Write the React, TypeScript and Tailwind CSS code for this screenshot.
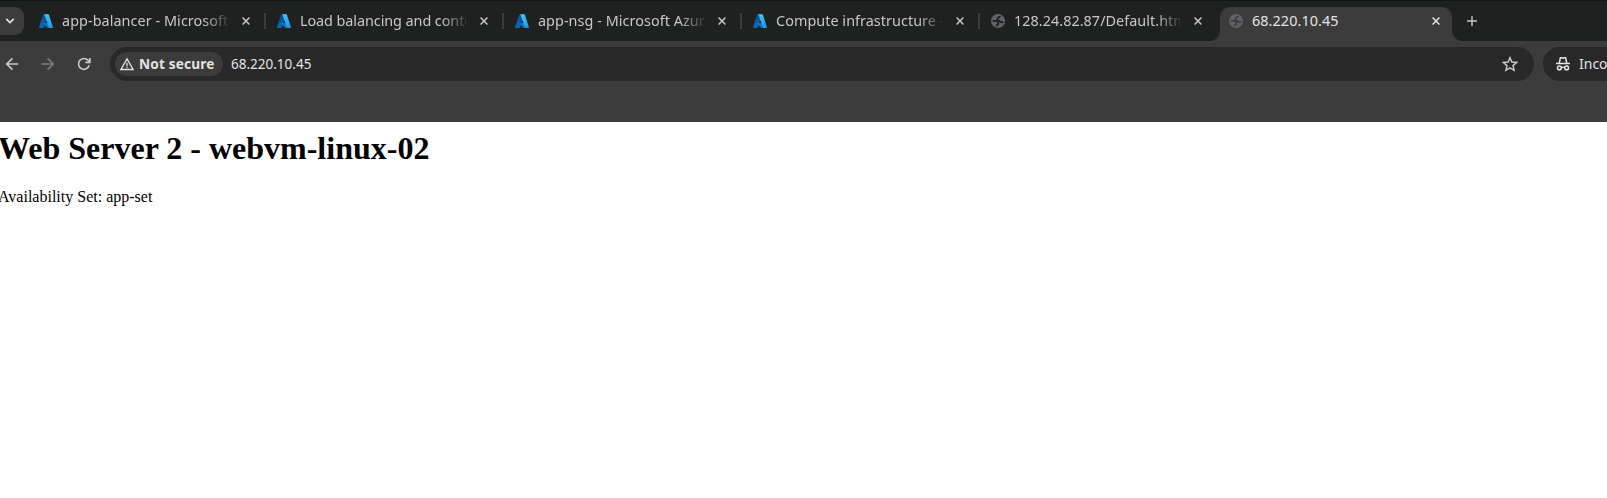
import type { ReactNode } from "react";

type Tab = { title: string; icon: "azure" | "globe"; spacing: string; active?: boolean };

const tabs: Tab[] = [
  { title: "app-balancer - Microsoft Azure", icon: "azure", spacing: "tracking-[0.06px]" },
  { title: "Load balancing and content delivery", icon: "azure", spacing: "tracking-[-0.07px]" },
  { title: "app-nsg - Microsoft Azure", icon: "azure", spacing: "tracking-[0.05px]" },
  { title: "Compute infrastructure - Microsoft", icon: "azure", spacing: "tracking-[0.04px]" },
  { title: "128.24.82.87/Default.html", icon: "globe", spacing: "tracking-[0.04px]" },
  { title: "68.220.10.45", icon: "globe", spacing: "tracking-[0.08px]", active: true },
];

function AzureIcon() {
  return (
    <svg className="size-[14px] shrink-0" viewBox="0 0 96 96">
      <defs>
        <linearGradient id="azL" x1="0.6" y1="0" x2="0.3" y2="1">
          <stop offset="0" stopColor="#114a8b" />
          <stop offset="1" stopColor="#0669bc" />
        </linearGradient>
        <linearGradient id="azR" x1="0.3" y1="0" x2="0.6" y2="1">
          <stop offset="0" stopColor="#3ccbf4" />
          <stop offset="1" stopColor="#2892df" />
        </linearGradient>
      </defs>
      <path fill="url(#azL)" d="M33 2h30L32 94a5 5 0 0 1-4 2H5a5 5 0 0 1-5-6L28 5a5 5 0 0 1 5-3Z" />
      <path fill="#0078d4" d="M75 61H27a2 2 0 0 0-1 4l31 29a5 5 0 0 0 3 1h27Z" />
      <path fill="url(#azR)" d="M68 5a5 5 0 0 0-5-3H33a5 5 0 0 1 5 3l29 85a5 5 0 0 1-5 6h29a5 5 0 0 0 5-6Z" />
    </svg>
  );
}

function GlobeIcon({ active }: { active?: boolean }) {
  return (
    <svg className="size-[14px] shrink-0" viewBox="0 0 14 14" fill="none">
      <circle cx="7" cy="7" r="7" fill="#5f6368" />
      <g className={active ? "stroke-[#3c3c3c]" : "stroke-[#1f2120]"} strokeWidth="1.9" strokeLinejoin="round">
        <path d="M9.200 2.200C8.500 3.700 6.200 3.500 6.200 5.200S8.200 6.300 8.900 7.300 10.300 8.600 12.300 7.900" />
        <path d="M1.600 6.900H4.200C6.500 6.900 7.600 8.200 7.400 9.600S5.600 10.500 5.400 12.300" />
      </g>
    </svg>
  );
}

function Stroke({ className, d, width = 1.6 }: { className: string; d: string; width?: number }) {
  return (
    <svg className={className} viewBox="0 0 16 16" fill="none" stroke="currentColor" strokeWidth={width}>
      <path d={d} />
    </svg>
  );
}

function TabItem({ tab, divider }: { tab: Tab; divider: boolean }) {
  return (
    <div
      className={
        tab.active
          ? "relative flex h-[34px] w-[232px] shrink-0 items-center rounded-t-[10px] bg-[#3c3c3c] pl-[9px] text-[#e3e3e3]"
          : "relative flex h-[34px] w-[238px] shrink-0 items-center pl-[9px] text-[#c7c7c7]"
      }
    >
      <div className="flex w-full items-center pb-[6px]">
        {tab.icon === "azure" ? <AzureIcon /> : <GlobeIcon active={tab.active} />}
        <span
          className={`ml-[9px] w-[166px] shrink-0 overflow-hidden text-[14.4px] leading-[20px] whitespace-nowrap ${tab.spacing} ${
            tab.active ? "" : "[mask-image:linear-gradient(to_right,#000_141px,transparent_170px)]"
          }`}
        >
          {tab.title}
        </span>
        <Stroke className="ml-[13px] size-[10px] shrink-0" d="M2.500 2.500l11 11M13.500 2.500l-11 11" width={2.4} />
        {divider && <span className="ml-[13px] h-4 w-[2px] shrink-0 bg-[#3c3c3c]" />}
      </div>
      {tab.active && (
        <>
          <span className="absolute bottom-0 -left-[10px] size-[10px] bg-[radial-gradient(circle_at_0_0,transparent_9.5px,#3c3c3c_10.2px)]" />
          <span className="absolute -right-[10px] bottom-0 size-[10px] bg-[radial-gradient(circle_at_100%_0,transparent_9.5px,#3c3c3c_10.2px)]" />
        </>
      )}
    </div>
  );
}

function Toolbar({ children }: { children: ReactNode }) {
  return <div className="flex h-[81px] items-start border-b border-[#444444] bg-[#3c3c3c] pt-[6px]">{children}</div>;
}

export default function App() {
  return (
    <div className="flex h-[498px] w-full flex-col overflow-hidden bg-white font-['Noto_Sans',sans-serif]">
      <div className="flex h-[41px] shrink-0 overflow-hidden border-t border-[#141615] bg-[#1f2120] pt-[6px]">
        <div className="flex h-7 w-6 shrink-0 items-center rounded-r-[9px] bg-[#3c3c3c] pl-[5px] text-[#e3e3e3]">
          <Stroke className="size-[10px]" d="M2 4.500l6 6 6-6" width={2.8} />
        </div>
        <div className="flex pl-[6px]">
          {tabs.map((tab, i) => (
            <TabItem key={tab.title} tab={tab} divider={i < 4} />
          ))}
        </div>
        <Stroke className="mt-[9px] ml-[15px] size-[10px] shrink-0 text-[#c7c7c7]" d="M8 0v16M0 8h16" width={2.2} />
      </div>
      <div className="shrink-0">
        <Toolbar>
          <div className="flex h-[34px] w-[110px] shrink-0 items-center pl-[5px] text-[#c7c7c7]">
            <Stroke className="size-[14px]" d="M15 8H2M8.500 1.500L2 8l6.500 6.500" width={1.900} />
            <Stroke className="ml-[22px] size-[14px] text-[#7c7c7c]" d="M1 8h13M7.500 1.500L14 8l-6.500 6.500" width={1.900} />
            <Stroke
              className="ml-[22px] size-[14px]"
              d="M13.900 9.500A6.200 6.200 0 1 1 12.600 3.800L14.500 6M14.700 1v5.200H9.500"
              width={1.900}
            />
          </div>
          <div className="flex h-[34px] w-[1424px] shrink-0 items-center rounded-full bg-[#282828] pr-[16px] pl-[5px]">
            <div className="flex h-6 w-[108px] shrink-0 items-center rounded-full bg-[#3c3c3c] pl-[5px] text-[#e3e3e3]">
              <Stroke className="size-[14px] shrink-0" d="M8 2.200L15 14.300H1ZM8 6.500v3.700M8 11.200v1.500" width={1.500} />
              <span className="ml-[5px] text-[13.6px] leading-[20px] font-bold tracking-[0.18px] whitespace-nowrap">Not secure</span>
            </div>
            <span className="ml-[8px] text-[13.5px] leading-[20px] text-[#e3e3e3]">68.220.10.45</span>
            <Stroke
              className="ml-auto size-[16px] text-[#c7c7c7]"
              d="M8 1.700l1.900 4.400 4.700.4-3.600 3.100 1.100 4.700L8 11.800l-4.100 2.500L5 9.600 1.400 6.500l4.700-.4Z"
              width={1.500}
            />
          </div>
          <div className="ml-[9px] flex h-[34px] w-[120px] shrink-0 items-center rounded-l-full bg-[#282828] pl-[13px] text-[#e3e3e3]">
            <svg className="size-[14px] shrink-0" viewBox="0 0 14 14" fill="none" stroke="currentColor" strokeWidth="1.500">
              <path d="M3.300 6L4.300 1q.2-.6.900-.4L7 1.200l1.800-.6q.7-.2.900.4l1 5M0 6.600h14" />
              <circle cx="3.400" cy="10.900" r="1.900" />
              <circle cx="10.600" cy="10.900" r="1.900" />
              <path d="M5.300 10.600q1.700-.8 3.400 0" />
            </svg>
            <span className="ml-[9px] text-[14px] leading-[20px]">Incognito</span>
          </div>
        </Toolbar>
      </div>
      <main className="-ml-[2px] font-['Liberation_Serif',serif] text-black">
        <h1 className="mt-[8px] text-[32px] leading-[37px] font-bold">Web Server 2 - webvm-linux-02</h1>
        <p className="mt-[21px] text-[16px] leading-[18px]">Availability Set: app-set</p>
      </main>
    </div>
  );
}
